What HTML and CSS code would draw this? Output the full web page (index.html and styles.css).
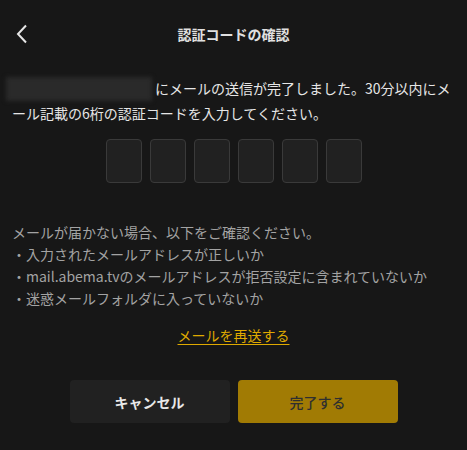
FILE: index.html
```html
<!DOCTYPE html>
<html lang="ja">
  <head>
    <meta charset="UTF-8" />
    <meta name="viewport" content="width=device-width, initial-scale=1.0" />
    <title>認証コードの確認</title>
    <link rel="stylesheet" href="styles.css">
  </head>
  <body>
    <header class="header">
      <button class="back" type="button" aria-label="戻る">
        <svg width="14" height="20" viewBox="0 0 14 20">
          <path d="M11 1.5 L3 10 L11 18.5" fill="none" stroke="#e6e6e6" stroke-width="2" />
        </svg>
      </button>
      <h1 class="title">認証コードの確認</h1>
      <span></span>
    </header>

    <main class="content">
      <p class="lead">
        <span class="masked"></span>にメールの送信が完了しました。30分以内にメール記載の6桁の認証コードを入力してください。
      </p>

      <div class="code">
        <input class="code-box" type="text" maxlength="1" />
        <input class="code-box" type="text" maxlength="1" />
        <input class="code-box" type="text" maxlength="1" />
        <input class="code-box" type="text" maxlength="1" />
        <input class="code-box" type="text" maxlength="1" />
        <input class="code-box" type="text" maxlength="1" />
      </div>

      <div class="notes">
        <p>メールが届かない場合、以下をご確認ください。</p>
        <p>・入力されたメールアドレスが正しいか</p>
        <p>・mail.abema.tvのメールアドレスが拒否設定に含まれていないか</p>
        <p>・迷惑メールフォルダに入っていないか</p>
      </div>

      <div class="resend">
        <a href="#">メールを再送する</a>
      </div>

      <div class="actions">
        <button class="btn btn-cancel" type="button">キャンセル</button>
        <button class="btn btn-done" type="button">完了する</button>
      </div>
    </main>
  </body>
</html>
```

FILE: styles.css
```css
/* Reset */
* {
  margin: 0;
  padding: 0;
  box-sizing: border-box;
}

body {
  font-family: "Noto Sans CJK JP", "Noto Sans", sans-serif;
  background: #171717;
  color: #e6e6e6;
  font-size: 14px;
}

/* Header */
.header {
  height: 68px;
  display: grid;
  grid-template-columns: 1fr auto 1fr;
  align-items: center;
  padding: 0 15px;
}

.back {
  background: none;
  border: none;
  width: 14px;
  height: 20px;
  display: flex;
}

.title {
  font-size: 14px;
  font-weight: 700;
  color: #e0e0e0;
  line-height: 20px;
}

/* Content */
.content {
  padding: 8px 12px 0;
}

.lead {
  line-height: 24px;
  color: #e6e6e6;
}

.masked {
  display: inline-block;
  width: 146px;
  height: 24px;
  vertical-align: -7px;
  background: #2a2a2a;
  filter: blur(2px);
  margin-left: -6px;
  margin-right: 3px;
}

/* Code inputs */
.code {
  display: flex;
  justify-content: center;
  gap: 8px;
  margin-top: 14px;
}

.code-box {
  width: 36px;
  height: 44px;
  background: #212121;
  border: 1px solid #3a3a3a;
  border-radius: 4px;
  color: #e6e6e6;
  text-align: center;
  font-size: 18px;
}

/* Notes */
.notes {
  margin-top: 38px;
  line-height: 22px;
  color: #a3a3a3;
}

/* Resend */
.resend {
  margin-top: 15px;
  text-align: center;
  line-height: 22px;
}

.resend a {
  color: #dfa900;
  text-decoration: underline;
  text-underline-offset: 3px;
}

/* Buttons */
.actions {
  display: flex;
  justify-content: center;
  gap: 8px;
  margin-top: 34px;
}

.btn {
  width: 160px;
  height: 43px;
  border: none;
  border-radius: 4px;
  font-family: inherit;
  font-size: 14px;
}

.btn-cancel {
  background: #212121;
  color: #e8e8e8;
  font-weight: 700;
}

.btn-done {
  background: #a17b04;
  color: #2f2f2f;
  font-weight: 500;
}
```
